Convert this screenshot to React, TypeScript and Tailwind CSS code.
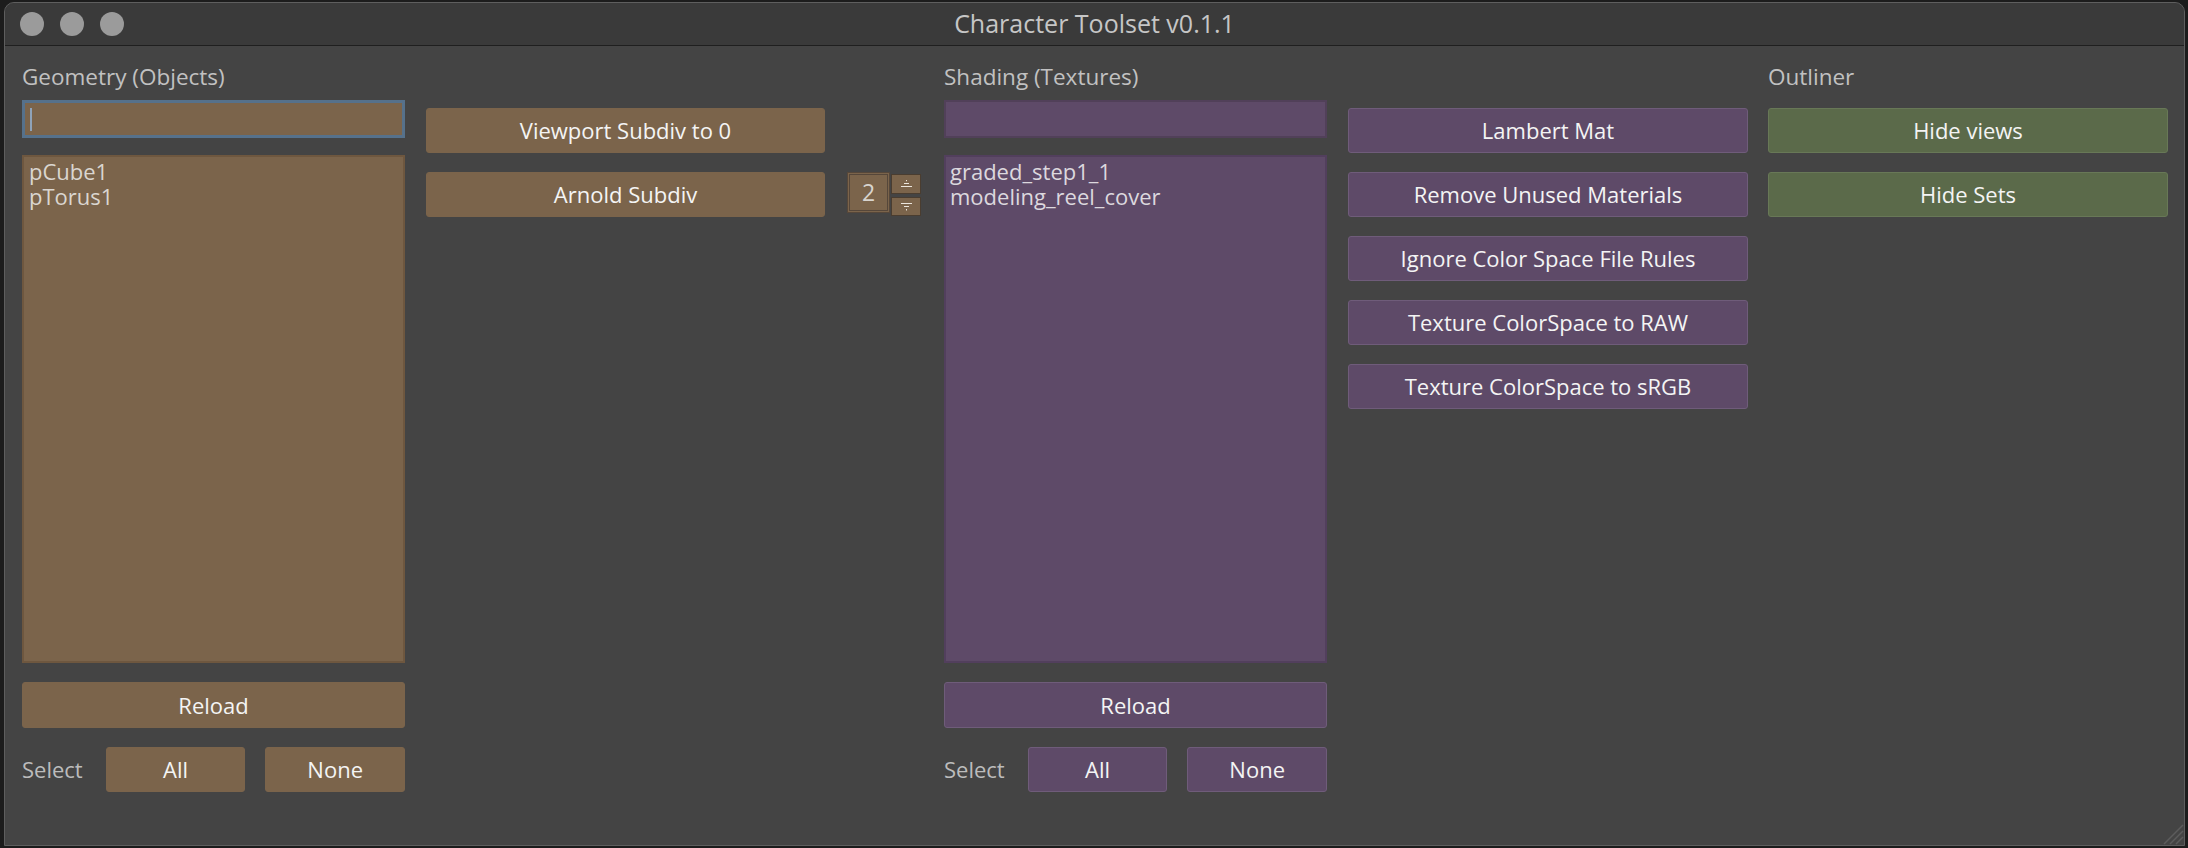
import React from "react";

const BROWN = "bg-[#7b644b]";

function Btn({
  children,
  tone,
  className = "",
}: {
  children: React.ReactNode;
  tone: "brown" | "purple" | "green";
  className?: string;
}) {
  const toneCls =
    tone === "brown"
      ? "bg-[#7b644b] border border-[#7b644b]"
      : tone === "purple"
      ? "bg-[#5e4a68] border border-[#6f5c7a]"
      : "bg-[#5b6a4a] border border-[#687857]";
  return (
    <div
      className={`flex items-center justify-center rounded-[3px] text-[22px] font-medium text-[#f4f4f4] ${toneCls} ${className}`}
    >
      {children}
    </div>
  );
}

function Label({ children }: { children: React.ReactNode }) {
  return <div className="h-[26px] leading-[26px] text-[22.5px] text-[#c1c1c1] whitespace-nowrap">{children}</div>;
}

function SelectRow({ tone }: { tone: "brown" | "purple" }) {
  return (
    <div className="flex items-center h-[45px] mt-[19px]">
      <div className="w-[84px] text-[22px] text-[#bcbcbc]">Select</div>
      <Btn tone={tone} className="w-[140px] h-[45px]">
        All
      </Btn>
      <Btn tone={tone} className="w-[140px] h-[45px] ml-[20px]">
        None
      </Btn>
    </div>
  );
}

function Spin() {
  return (
    <div className="flex items-start mt-[108px]">
      <div className="w-[43px] h-[41px] border-[3px] border-double border-[#56473a] bg-[#7b644b] flex items-center justify-center text-[23px] text-[#d8d4ce]">
        2
      </div>
      <div className="flex flex-col gap-[3px] ml-[1px] mt-[2px]">
        <div className="w-[30px] h-[20px] bg-[#7b644b] border border-[#4a3d30] flex items-center justify-center">
          <svg width="13" height="10" viewBox="0 0 13 10">
            <path d="M6.5 1 L6.5 2.2" stroke="#ebe5dd" strokeWidth="1" />
            <path d="M4 4.5 L9 4.5" stroke="#ebe5dd" strokeWidth="1" />
            <path d="M1 7.5 L12 7.5" stroke="#ebe5dd" strokeWidth="1" />
          </svg>
        </div>
        <div className="w-[30px] h-[19px] bg-[#7b644b] border border-[#4a3d30] flex items-center justify-center">
          <svg width="13" height="10" viewBox="0 0 13 10">
            <path d="M1 1.5 L12 1.5" stroke="#ebe5dd" strokeWidth="1" />
            <path d="M4 4.5 L9 4.5" stroke="#ebe5dd" strokeWidth="1" />
            <path d="M6.5 7 L6.5 8.5" stroke="#ebe5dd" strokeWidth="1" />
          </svg>
        </div>
      </div>
    </div>
  );
}

export default function App() {
  return (
    <div
      className="w-[2188px] h-[848px] bg-[#1c1c1c] pt-[2px] pl-[4px] overflow-hidden"
      style={{ fontFamily: '"Open Sans", "Noto Sans", sans-serif' }}
    >
      <div className="relative w-[2181px] h-[844px] bg-[#444444] border border-[#5e5e5e] rounded-t-[10px] overflow-hidden">
        {/* Title bar */}
        <div className="grid grid-cols-[1fr_auto_1fr] items-center h-[43px] bg-[#3a3a3a] border-b border-b-[#1f1f1f]">
          <div className="flex items-center gap-[16px] pl-[15px]">
            <div className="w-[24px] h-[24px] rounded-full bg-[#9b9b9b]" />
            <div className="w-[24px] h-[24px] rounded-full bg-[#9b9b9b]" />
            <div className="w-[24px] h-[24px] rounded-full bg-[#9b9b9b]" />
          </div>
          <div className="text-[25px] text-[#c6c6c6] leading-none pb-[2px]">Character Toolset v0.1.1</div>
          <div />
        </div>

        {/* Content */}
        <div className="flex items-start pl-[17px] pt-[18px]">
          {/* Geometry column */}
          <div className="flex flex-col w-[383px] shrink-0">
            <Label>Geometry (Objects)</Label>
            <div className={`mt-[10px] h-[38px] ${BROWN} border-[3px] border-[#56718b] flex items-center pl-[5px]`}>
              <div className="w-[2px] h-[23px] bg-[#8fa3b9]" />
            </div>
            <div className={`mt-[17px] h-[508px] ${BROWN} border-2 border-[#6e573f] pl-[5px] pt-[2px] text-[22px] leading-[25px] text-[#dad6d0]`}>
              <div>pCube1</div>
              <div>pTorus1</div>
            </div>
            <Btn tone="brown" className="mt-[19px] h-[46px]">
              Reload
            </Btn>
            <SelectRow tone="brown" />
          </div>

          {/* Subdiv column */}
          <div className="flex flex-col w-[399px] shrink-0 ml-[21px] pt-[44px] gap-[19px]">
            <Btn tone="brown" className="h-[45px]">
              Viewport Subdiv to 0
            </Btn>
            <Btn tone="brown" className="h-[45px]">
              Arnold Subdiv
            </Btn>
          </div>
          <div className="ml-[22px] w-[74px] shrink-0">
            <Spin />
          </div>

          {/* Shading column */}
          <div className="flex flex-col w-[383px] shrink-0 ml-[23px]">
            <Label>Shading (Textures)</Label>
            <div className="mt-[10px] h-[38px] bg-[#5e4a68] border-2 border-[#514059]" />
            <div className="mt-[17px] h-[508px] bg-[#5e4a68] border-2 border-[#523f5d] pl-[4px] pt-[2px] text-[22px] leading-[25px] text-[#dcd8de]">
              <div>graded_step1_1</div>
              <div>modeling_reel_cover</div>
            </div>
            <Btn tone="purple" className="mt-[19px] h-[46px]">
              Reload
            </Btn>
            <SelectRow tone="purple" />
          </div>

          {/* Material buttons */}
          <div className="flex flex-col w-[400px] shrink-0 ml-[21px] pt-[44px] gap-[19px]">
            <Btn tone="purple" className="h-[45px]">
              Lambert Mat
            </Btn>
            <Btn tone="purple" className="h-[45px]">
              Remove Unused Materials
            </Btn>
            <Btn tone="purple" className="h-[45px]">
              Ignore Color Space File Rules
            </Btn>
            <Btn tone="purple" className="h-[45px]">
              Texture ColorSpace to RAW
            </Btn>
            <Btn tone="purple" className="h-[45px]">
              Texture ColorSpace to sRGB
            </Btn>
          </div>

          {/* Outliner */}
          <div className="flex flex-col w-[400px] shrink-0 ml-[20px]">
            <Label>Outliner</Label>
            <div className="flex flex-col gap-[19px] mt-[18px]">
              <Btn tone="green" className="h-[45px]">
                Hide views
              </Btn>
              <Btn tone="green" className="h-[45px]">
                Hide Sets
              </Btn>
            </div>
          </div>
        </div>

        {/* resize grip */}
        <svg className="absolute right-0 bottom-0" width="26" height="26" viewBox="0 0 26 26">
          <path d="M25 6 L6 25" stroke="#5c5c5c" strokeWidth="1.5" />
          <path d="M25 12 L12 25" stroke="#5c5c5c" strokeWidth="1.5" />
          <path d="M25 18 L18 25" stroke="#5c5c5c" strokeWidth="1.5" />
        </svg>
      </div>
    </div>
  );
}
